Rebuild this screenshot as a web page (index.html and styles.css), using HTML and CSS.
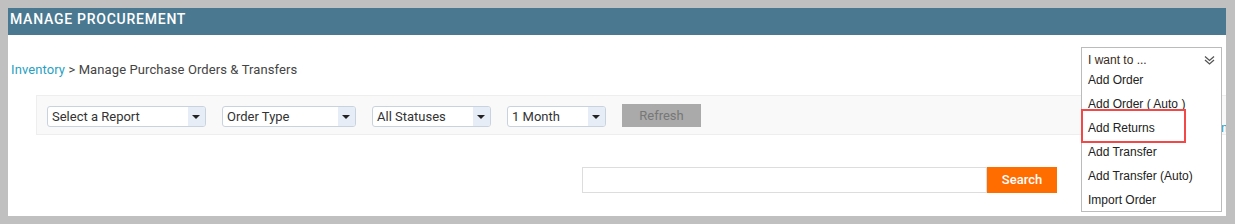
FILE: index.html
```html
<!DOCTYPE html>
<html>
<head>
<meta charset="utf-8">
<link rel="stylesheet" href="styles.css">
</head>
<body>
<div class="frame">
  <div class="header">MANAGE PROCUREMENT</div>
  <div class="panel">
    <div class="crumb"><a class="crumb-link">Inventory</a> &gt; Manage Purchase Orders &amp; Transfers</div>
    <div class="filters">
      <div class="select w1"><span class="sel-text">Select a Report</span><span class="sel-arrow"></span></div>
      <div class="select w2"><span class="sel-text">Order Type</span><span class="sel-arrow"></span></div>
      <div class="select w3"><span class="sel-text">All Statuses</span><span class="sel-arrow"></span></div>
      <div class="select w4"><span class="sel-text">1 Month</span><span class="sel-arrow"></span></div>
      <div class="refresh">Refresh</div>
    </div>
    <div class="search-row">
      <div class="search-input"></div>
      <div class="search-btn">Search</div>
    </div>
    <span class="hidden-link">n</span>
    <div class="menu">
      <div class="menu-head"><span>I want to ...</span>
        <svg class="chev" width="11" height="11" viewBox="0 0 11 11"><path d="M1 1.5 L5.5 5.5 L10 1.5 M1 5 L5.5 9 L10 5" fill="none" stroke="#555" stroke-width="1.3"/></svg>
      </div>
      <div class="menu-item">Add Order</div>
      <div class="menu-item">Add Order ( Auto )</div>
      <div class="menu-item">Add Returns</div>
      <div class="menu-item">Add Transfer</div>
      <div class="menu-item">Add Transfer (Auto)</div>
      <div class="menu-item">Import Order</div>
    </div>
    <div class="highlight"></div>
  </div>
</div>
</body>
</html>
```
FILE: styles.css
```css
html, body { margin: 0; padding: 0; }
body { background: #c0c0c0; font-family: Roboto, "Liberation Sans", Arial, sans-serif; }
.frame { margin: 8px 9px 8px 8px; width: 1218px; }
.header {
  height: 27px; background: #4a7891; color: #fff;
  font-size: 14px; font-weight: 500; letter-spacing: 0.75px;
  line-height: 22px; padding-left: 2px; box-sizing: border-box;
}
.panel { position: relative; background: #fff; height: 181px; overflow: hidden; }
.crumb { padding: 27px 0 0 3px; font-size: 13px; letter-spacing: 0.1px; color: #444; line-height: 16px; height: 33px; box-sizing: border-box; }
.crumb-link { color: #2a9fc3; }
.filters {
  margin: 27px 0 0 28px; height: 40px; box-sizing: border-box;
  background: #f9f9f9; border: 1px solid #eeeeee; border-right: none;
  display: flex; align-items: center; padding-left: 10px;
}
.select {
  height: 21px; box-sizing: border-box; border: 1px solid #c9d3de; border-radius: 3px;
  background: #fff; display: flex; margin-right: 16px; margin-top: 2px; overflow: hidden;
}
.w1 { width: 159px; } .w2 { width: 134px; } .w3 { width: 119px; } .w4 { width: 99px; margin-right: 16px; }
.sel-text { flex: 1; font-size: 13px; color: #333; line-height: 19px; padding-left: 4px; white-space: nowrap; }
.sel-arrow { width: 17px; background: #e6edf6; position: relative; }
.sel-arrow::after {
  content: ""; position: absolute; left: 4px; top: 8px;
  border-left: 4px solid transparent; border-right: 4px solid transparent; border-top: 4px solid #222;
}
.refresh {
  width: 79px; height: 23px; background: #aaaaaa; color: #777; font-size: 13px;
  text-align: center; line-height: 23px;
}
.search-row { display: flex; margin: 32px 0 0 574px; }
.search-input { width: 405px; height: 26px; box-sizing: border-box; border: 1px solid #ddd; }
.search-btn { width: 70px; height: 26px; background: #ff6c00; color: #fff; font-size: 13px; font-weight: 500; text-align: center; line-height: 26px; }
.hidden-link { position: absolute; left: 1213px; top: 85px; color: #2a9fc3; font-size: 12.5px; }
.menu {
  position: absolute; left: 1073px; top: 12px; width: 141px; height: 165px; box-sizing: border-box;
  background: #fff; border: 1px solid #bbb; font-family: "Liberation Sans", Arial, sans-serif; font-size: 12px; color: #222;
  padding-left: 6px;
}
.menu-head { display: flex; justify-content: space-between; align-items: center; height: 22px; padding-top: 2px; box-sizing: border-box; padding-right: 6px; color: #3a2a1a; }
.chev { margin-top: 1px; }
.menu-item { height: 24px; line-height: 20px; white-space: nowrap; }
.highlight { position: absolute; left: 1073px; top: 74px; width: 105px; height: 34px; box-sizing: border-box; border: 2px solid #f24848; }
```
